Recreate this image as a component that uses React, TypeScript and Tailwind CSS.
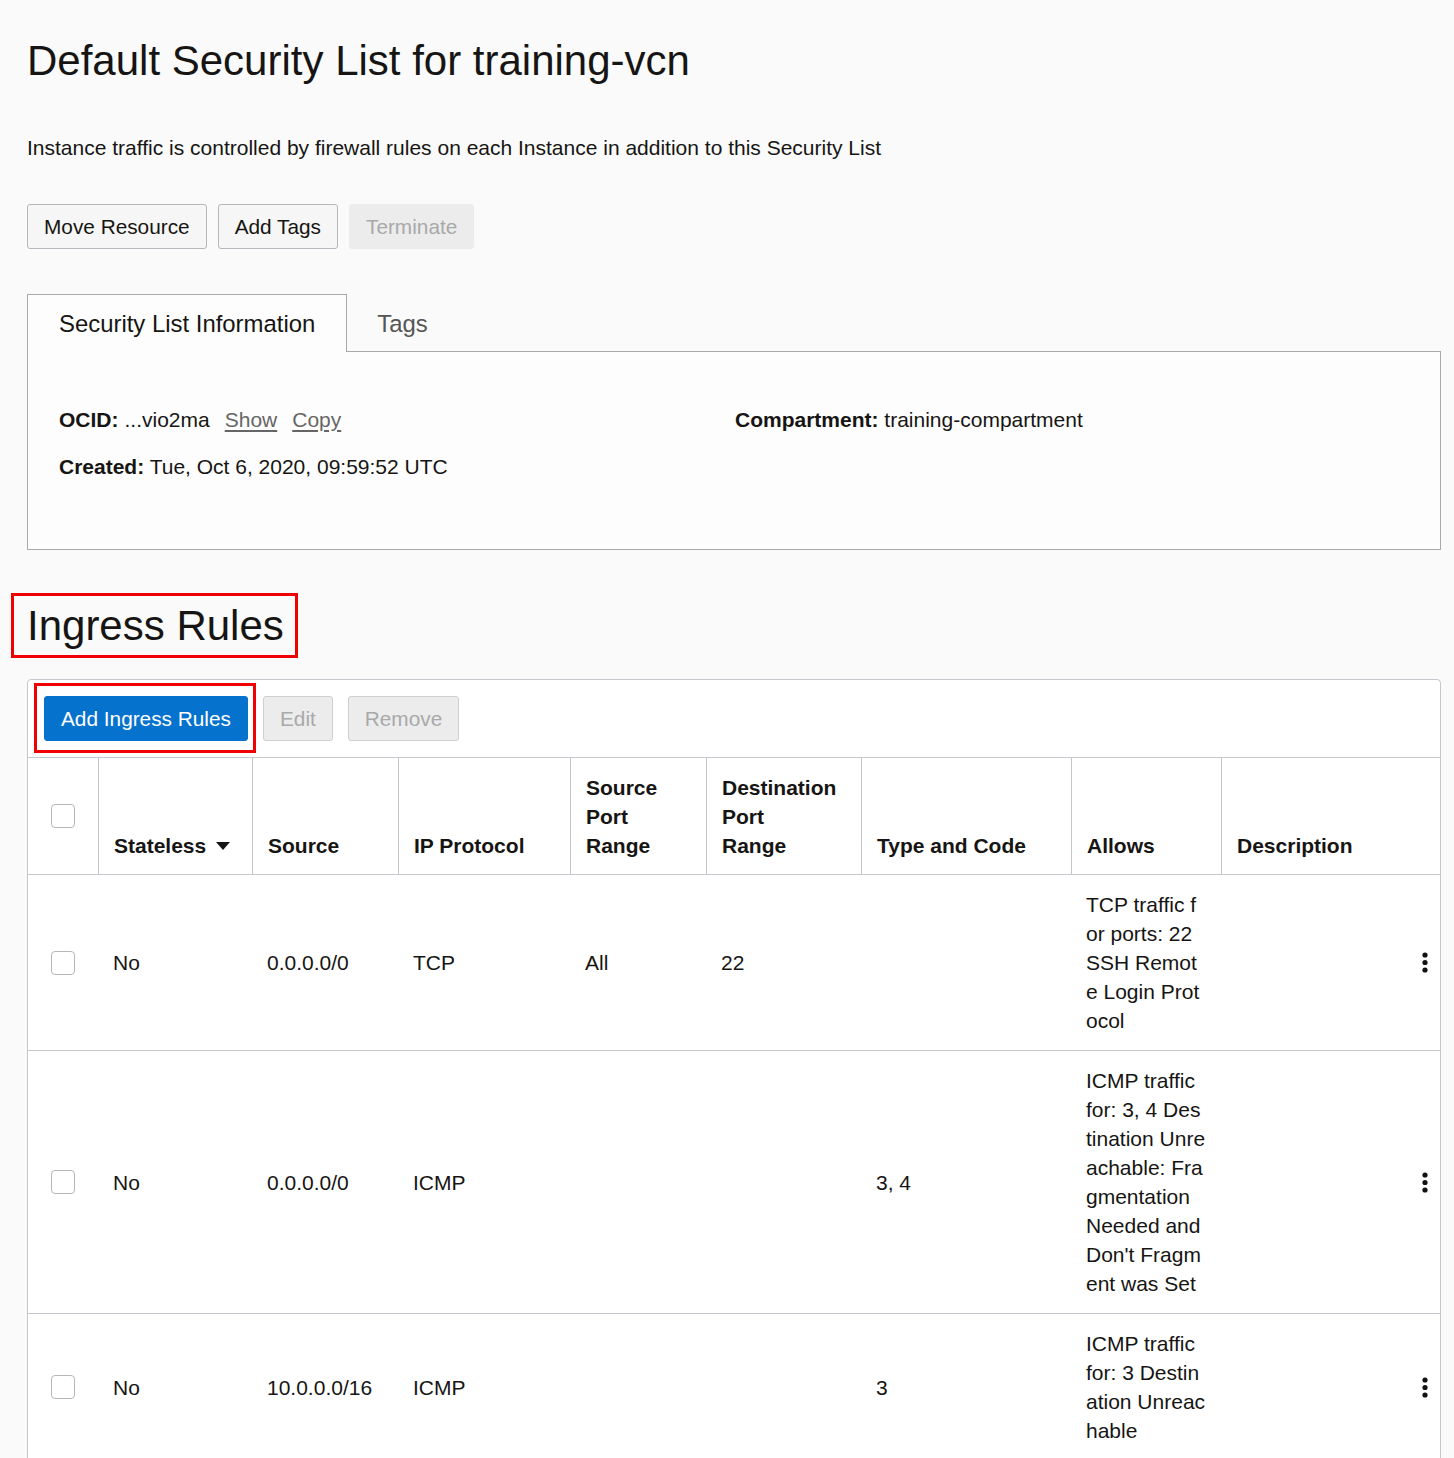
import React from "react";

const Kebab = () => (
  <svg width="6" height="21" viewBox="0 0 6 21" aria-hidden>
    <circle cx="3" cy="3" r="2.6" fill="#111" />
    <circle cx="3" cy="10.5" r="2.6" fill="#111" />
    <circle cx="3" cy="18" r="2.6" fill="#111" />
  </svg>
);

const Checkbox = () => (
  <div className="w-[24px] h-[24px] rounded-[4px] border border-[#b7b7b7] bg-white" />
);

const cols =
  "grid grid-cols-[70px_154px_146px_172px_136px_155px_210px_150px_1fr]";

type Row = {
  source: string;
  proto: string;
  srcPort: string;
  dstPort: string;
  type: string;
  allows: string[];
};

const rows: Row[] = [
  {
    source: "0.0.0.0/0",
    proto: "TCP",
    srcPort: "All",
    dstPort: "22",
    type: "",
    allows: ["TCP traffic f", "or ports: 22", "SSH Remot", "e Login Prot", "ocol"],
  },
  {
    source: "0.0.0.0/0",
    proto: "ICMP",
    srcPort: "",
    dstPort: "",
    type: "3, 4",
    allows: [
      "ICMP traffic",
      "for: 3, 4 Des",
      "tination Unre",
      "achable: Fra",
      "gmentation",
      "Needed and",
      "Don't Fragm",
      "ent was Set",
    ],
  },
  {
    source: "10.0.0.0/16",
    proto: "ICMP",
    srcPort: "",
    dstPort: "",
    type: "3",
    allows: ["ICMP traffic", "for: 3 Destin", "ation Unreac", "hable"],
  },
];

export default function App() {
  return (
    <div className="min-h-screen bg-[#fafafa] font-['Liberation_Sans',Arial,sans-serif] text-[#161513]">
      <div className="pl-[27px] pr-[13px] pt-[37px] pb-[20px]">
        <h1 className="text-[42px] leading-[48px] font-normal">
          Default Security List for training-vcn
        </h1>
        <p className="mt-[48px] text-[21px] leading-[29px]">
          Instance traffic is controlled by firewall rules on each Instance in addition to this Security List
        </p>

        <div className="mt-[42px] flex gap-[11px] text-[20.8px] leading-[29px]">
          <button className="h-[45px] px-[16px] rounded-[3px] border border-[#b5b8bc] bg-[#f6f6f6] text-[#161513]">
            Move Resource
          </button>
          <button className="h-[45px] px-[16px] rounded-[3px] border border-[#b5b8bc] bg-[#f6f6f6] text-[#161513]">
            Add Tags
          </button>
          <button className="h-[45px] px-[16px] rounded-[3px] border border-[#ececec] bg-[#ececec] text-[#a9a9a9]">
            Terminate
          </button>
        </div>

        <div className="mt-[45px] flex text-[23.9px] leading-[29px]">
          <div className="relative z-10 -mb-px h-[58px] border border-b-0 border-[#a9a9a9] bg-[#fdfdfd] px-[31px] pt-[14px]">
            Security List Information
          </div>
          <div className="px-[30px] pt-[15px] text-[#555555]">Tags</div>
        </div>
        <div className="h-[199px] border border-[#a9a9a9] bg-[#fdfdfd] px-[31px] pt-[53px] text-[21px] leading-[29px]">
          <div className="grid grid-cols-[676px_1fr]">
            <div>
              <div className="flex">
                <span className="font-bold">OCID:</span>
                <span className="ml-[6px]">...vio2ma</span>
                <span className="ml-[15px] text-[#666666] underline underline-offset-[3px]">Show</span>
                <span className="ml-[15px] text-[#666666] underline underline-offset-[3px]">Copy</span>
              </div>
              <div className="mt-[17.5px]">
                <span className="font-bold">Created:</span> Tue, Oct 6, 2020, 09:59:52 UTC
              </div>
            </div>
            <div>
              <span className="font-bold">Compartment:</span> training-compartment
            </div>
          </div>
        </div>

        <div className="mt-[52px] relative inline-block">
          <h2 className="text-[42px] leading-[48px] font-normal">Ingress Rules</h2>
          <div className="absolute left-[-16px] top-[-9px] w-[287px] h-[65px] border-[3px] border-[#f00000]" />
        </div>

        <div className="mt-[29px] border border-[#c4c7cc] rounded-t-[4px] bg-white text-[21px] leading-[29px]">
          <div className="flex gap-[15px] px-[16px] pt-[16px] pb-[16px] border-b border-[#c4c7cc] text-[20.8px]">
            <div className="relative">
              <button className="h-[45px] px-[16px] rounded-[3px] border border-[#0572ce] bg-[#0572ce] text-white">
                Add Ingress Rules
              </button>
              <div className="absolute left-[-10px] top-[-13px] w-[222px] h-[70px] border-[3px] border-[#f00000]" />
            </div>
            <button className="h-[45px] px-[16px] rounded-[3px] border border-[#cfcfcf] bg-[#ececec] text-[#a9a9a9]">
              Edit
            </button>
            <button className="h-[45px] px-[16px] rounded-[3px] border border-[#cfcfcf] bg-[#ececec] text-[#a9a9a9]">
              Remove
            </button>
          </div>

          <div className={`${cols} border-b border-[#c4c7cc] font-bold`}>
            <div className="flex items-center pl-[23px]">
              <Checkbox />
            </div>
            {[
              ["Stateless"],
              ["Source"],
              ["IP Protocol"],
              ["Source", "Port", "Range"],
              ["Destination", "Port", "Range"],
              ["Type and Code"],
              ["Allows"],
              ["Description"],
            ].map((lines, i) => (
              <div
                key={i}
                className="flex flex-col justify-end border-l border-[#c4c7cc] pl-[15px] pt-[15px] pb-[14px]"
              >
                {lines.map((l, j) => (
                  <div key={j} className="flex items-center whitespace-nowrap">
                    {l}
                    {i === 0 && (
                      <svg className="ml-[10px]" width="14" height="8" viewBox="0 0 14 8" aria-hidden>
                        <path d="M0 0 L14 0 L7 8 Z" fill="#161513" />
                      </svg>
                    )}
                  </div>
                ))}
              </div>
            ))}
          </div>

          {rows.map((r, i) => (
            <div key={i} className={`${cols} border-b border-[#c4c7cc]`}>
              <div className="flex items-center pl-[23px]">
                <Checkbox />
              </div>
              <div className="flex items-center pl-[15px]">No</div>
              <div className="flex items-center pl-[15px]">{r.source}</div>
              <div className="flex items-center pl-[15px]">{r.proto}</div>
              <div className="flex items-center pl-[15px]">{r.srcPort}</div>
              <div className="flex items-center pl-[15px]">{r.dstPort}</div>
              <div className="flex items-center pl-[15px]">{r.type}</div>
              <div className="flex flex-col justify-center pl-[15px] py-[15px]">
                {r.allows.map((l, j) => (
                  <div key={j} className="whitespace-nowrap">
                    {l}
                  </div>
                ))}
              </div>
              <div className="flex items-center justify-end pr-[12px]">
                <Kebab />
              </div>
            </div>
          ))}
        </div>
      </div>
    </div>
  );
}
